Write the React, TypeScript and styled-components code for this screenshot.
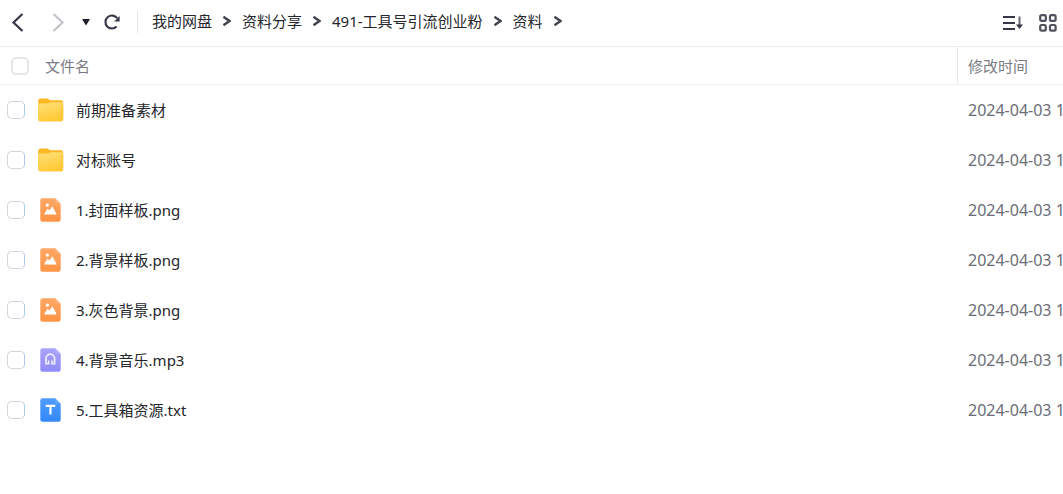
import React from "react";
import styled, { createGlobalStyle } from "styled-components";

const GlobalStyle = createGlobalStyle`
  * { box-sizing: border-box; }
  body {
    margin: 0;
    background: #fff;
    color: #25262b;
    font: 15px/20px "Noto Sans", "Noto Sans CJK SC", sans-serif;
    overflow-x: hidden;
  }
`;

const Toolbar = styled.header`
  display: flex;
  align-items: center;
  height: 47px;
  padding: 0 6px 2px 10px;
  border-bottom: 1px solid #ededf0;
`;

const NavGroup = styled.div`
  display: flex;
  align-items: center;
`;

const IconButton = styled.button<{ $width?: number; $gap?: number }>`
  display: flex;
  align-items: center;
  justify-content: center;
  flex: none;
  width: ${(p) => p.$width ?? 16}px;
  height: 24px;
  margin: 0 0 0 ${(p) => p.$gap ?? 0}px;
  padding: 0;
  border: 0;
  background: none;
  color: #353746;

  &:disabled {
    color: #c3c3c8;
  }
`;

const Divider = styled.span`
  width: 1px;
  height: 22px;
  margin: 0 14px 0 16px;
  background: #e4e4e8;
`;

const Crumbs = styled.ol`
  display: flex;
  flex: 1;
  min-width: 0;
  margin: 0;
  padding: 0 0 2px;
  list-style: none;
  white-space: nowrap;
`;

const Crumb = styled.li`
  display: flex;
  align-items: center;
  gap: 11px;
  margin-right: 11px;
`;

const CrumbLink = styled.a`
  color: inherit;
  text-decoration: none;
`;

const Actions = styled.div`
  display: flex;
  gap: 16px;
  padding-top: 2px;
`;

const FileTable = styled.table`
  width: 100%;
  table-layout: fixed;
  border-collapse: separate;
  border-spacing: 0;
`;

const HeadCell = styled.th<{ $date?: boolean }>`
  width: ${(p) => (p.$date ? "106px" : "auto")};
  height: 38px;
  padding: 0 0 0 ${(p) => (p.$date ? 10 : 11)}px;
  border-bottom: 1px solid #f1f1f4;
  border-left: ${(p) => (p.$date ? "1px solid #e9e9ed" : "0")};
  color: #7a7c85;
  font-weight: 400;
  text-align: left;
  white-space: nowrap;
`;

const NameCell = styled.td`
  height: 50px;
  padding: 0 0 0 7px;
`;

const DateCell = styled.td`
  padding: 0 0 0 11px;
  overflow: hidden;
  color: #6b6d76;
  font-size: 16px;
  white-space: nowrap;
`;

const Line = styled.div`
  display: flex;
  align-items: center;
`;

const Checkbox = styled.input<{ $head?: boolean }>`
  appearance: none;
  flex: none;
  width: 18px;
  height: 18px;
  margin: 0;
  border: ${(p) => (p.$head ? "2px solid #e6e6e8" : "1px solid #d2d5dc")};
  border-right-color: ${(p) => (p.$head ? "#e6e6e8" : "#abc8e6")};
  border-radius: 5px;
  background: #fff;

  &:checked {
    background: #448aff;
  }
`;

const HeadLabel = styled.label`
  margin-left: 16px;
`;

const FileLabel = styled.label`
  display: flex;
  align-items: center;
  gap: 12px;
  margin-left: 12px;
  white-space: nowrap;
`;

const IconSlot = styled.span`
  display: flex;
  justify-content: center;
  width: 27px;
`;

const Chevron = ({ flip = false }: { flip?: boolean }) => (
  <svg width="16" height="20" viewBox="0 0 16 20" fill="none" stroke="currentColor" strokeWidth="2.2">
    <path d={flip ? "M3.5 2 12.5 10.5 3.5 19" : "M12.5 2 3.5 10.5 12.5 19"} />
  </svg>
);

const CrumbChevron = () => (
  <svg width="8" height="12" viewBox="0 0 8 12" fill="none" stroke="#41434f" strokeWidth="2.4" aria-hidden="true">
    <path d="M0.4 1.8 6.6 6 0.4 10.2" />
  </svg>
);

const Caret = () => (
  <svg width="8" height="8" viewBox="0 0 8 8" fill="#1d1f2a">
    <path d="M0.8 1h6.4q.8 0 .4.8L4.5 6.8q-.5.7-1 0L.4 1.8Q0 1 .8 1z" />
  </svg>
);

const Refresh = () => (
  <svg width="17" height="18" viewBox="0 0 17 18" fill="none" stroke="currentColor" strokeWidth="2.1">
    <path d="M12.6 13.6A6.5 6.5 0 1 1 13.2 5.2" />
    <path d="M15.6 3v5.4h-5.4z" fill="currentColor" stroke="none" />
  </svg>
);

const SortIcon = () => (
  <svg width="20" height="18" viewBox="0 0 20 18" fill="none" stroke="currentColor" strokeWidth="2">
    <path d="M0 3h12M0 9h12M0 15h12" />
    <path d="M16.5 2.5v10" stroke="#666873" />
    <path d="M13 10.5h7l-3.5 4.5z" fill="currentColor" stroke="none" />
  </svg>
);

const GridIcon = () => (
  <svg width="18" height="18" viewBox="0 0 18 18" fill="none" stroke="#50525e" strokeWidth="2.2">
    <rect x="1.2" y="1.2" width="5.6" height="5.6" rx="1.4" />
    <rect x="11" y="1.2" width="5.6" height="5.6" rx="1.4" />
    <rect x="1.2" y="11" width="5.6" height="5.6" rx="1.4" />
    <rect x="11" y="11" width="5.6" height="5.6" rx="1.4" />
  </svg>
);

const FolderIcon = () => (
  <svg width="26" height="24" viewBox="0 0 26 24" aria-hidden="true">
    <defs>
      <linearGradient id="folder" x1="0" y1="0" x2="0.3" y2="1">
        <stop offset="0" stopColor="#ffe07a" />
        <stop offset="1" stopColor="#ffca37" />
      </linearGradient>
    </defs>
    <path d="M0.2 3Q.2.5 2.3.5h6.9q1 0 1.6.8l.9.9h11.3q2.2 0 2.2 2.2v15H.2z" fill="#fbb822" />
    <path d="M.2 6.8q0-1.4 1.4-1.4h8.3q.9 0 1.6-.6.8-.5 1.6-.5h10.5q1.6 0 1.6 1.6v15.5q0 2-2 2h-21q-2 0-2-2z" fill="url(#folder)" />
    <path d="M23.9 6.5v15" stroke="#fbc02f" strokeWidth="0.8" />
  </svg>
);

type Kind = "folder" | "image" | "audio" | "text";

const PAPER: Record<Exclude<Kind, "folder">, [string, string, string]> = {
  image: ["#ffa765", "#ff9445", "#ffb880"],
  audio: ["#a9a5fd", "#8f8af8", "#b9b6ff"],
  text: ["#4f9cff", "#3488fa", "#70b0ff"],
};

const PaperIcon = ({ kind }: { kind: Exclude<Kind, "folder"> }) => {
  const [from, to, fold] = PAPER[kind];
  return (
    <svg width="21" height="24" viewBox="0 0 21 24" aria-hidden="true">
      <defs>
        <linearGradient id={kind} x1="0" y1="0" x2="0" y2="1">
          <stop offset="0" stopColor={from} />
          <stop offset="1" stopColor={to} />
        </linearGradient>
      </defs>
      <path d="M2.5.3h12.7L20.7 5.8v15.7q0 2.2-2.2 2.2h-16Q.3 23.7.3 21.5v-19Q.3.3 2.5.3z" fill={`url(#${kind})`} />
      <path d="M15.2.3l5.5 5.5h-3.6q-1.9 0-1.9-1.9z" fill={fold} opacity="0.6" />
      {kind === "image" && (
        <g fill="#fff">
          <circle cx="7.4" cy="7.2" r="1.6" />
          <path d="M4.4 16.4V15.6L7.6 10.8l2 1.8 2.6-4.4 4.2 7.4v.8z" />
        </g>
      )}
      {kind === "audio" && (
        <g fill="none" stroke="#f0efff">
          <path d="M6 15.2V10.8a4.3 4.6 0 0 1 8.6 0V15.2" strokeWidth="1.7" />
          <path d="M5.2 15.8h3.4V12.6M15.4 15.8H12V12.6" strokeWidth="1.6" />
        </g>
      )}
      {kind === "text" && <path d="M5.7 7.8h9.6M10.5 7v9.5" stroke="#fff" strokeWidth="2.2" />}
    </svg>
  );
};

const crumbs = ["我的网盘", "资料分享", "491-工具号引流创业粉", "资料"];

const files: { name: string; kind: Kind }[] = [
  { name: "前期准备素材", kind: "folder" },
  { name: "对标账号", kind: "folder" },
  { name: "1.封面样板.png", kind: "image" },
  { name: "2.背景样板.png", kind: "image" },
  { name: "3.灰色背景.png", kind: "image" },
  { name: "4.背景音乐.mp3", kind: "audio" },
  { name: "5.工具箱资源.txt", kind: "text" },
];

export default function App() {
  return (
    <>
      <GlobalStyle />
      <Toolbar>
        <NavGroup>
          <IconButton aria-label="后退"><Chevron /></IconButton>
          <IconButton $gap={24} disabled aria-label="前进"><Chevron flip /></IconButton>
          <IconButton $gap={12} aria-label="历史记录"><Caret /></IconButton>
          <IconButton $gap={10} $width={17} aria-label="刷新"><Refresh /></IconButton>
        </NavGroup>
        <Divider />
        <Crumbs>
          {crumbs.map((name) => (
            <Crumb key={name}>
              <CrumbLink href="#">{name}</CrumbLink>
              <CrumbChevron />
            </Crumb>
          ))}
        </Crumbs>
        <Actions>
          <IconButton $width={20} aria-label="排序"><SortIcon /></IconButton>
          <IconButton $width={18} aria-label="网格视图"><GridIcon /></IconButton>
        </Actions>
      </Toolbar>
      <FileTable>
        <thead>
          <tr>
            <HeadCell scope="col">
              <Line>
                <Checkbox $head type="checkbox" id="all" />
                <HeadLabel htmlFor="all">文件名</HeadLabel>
              </Line>
            </HeadCell>
            <HeadCell scope="col" $date>修改时间</HeadCell>
          </tr>
        </thead>
        <tbody>
          {files.map(({ name, kind }, i) => (
            <tr key={name}>
              <NameCell>
                <Line>
                  <Checkbox type="checkbox" id={`file-${i}`} />
                  <FileLabel htmlFor={`file-${i}`}>
                    <IconSlot>
                      {kind === "folder" ? <FolderIcon /> : <PaperIcon kind={kind} />}
                    </IconSlot>
                    {name}
                  </FileLabel>
                </Line>
              </NameCell>
              <DateCell>2024-04-03 1</DateCell>
            </tr>
          ))}
        </tbody>
      </FileTable>
    </>
  );
}
